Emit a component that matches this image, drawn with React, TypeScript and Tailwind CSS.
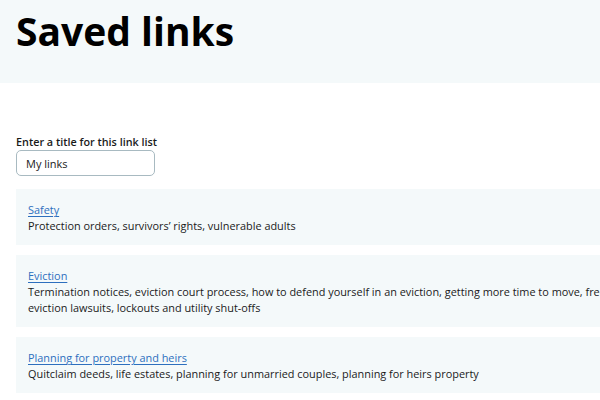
import React from 'react';

interface SavedLink {
  title: string;
  description: string;
}

const links: SavedLink[] = [
  { title: 'Safety', description: 'Protection orders, survivors’ rights, vulnerable adults' },
  {
    title: 'Eviction',
    description:
      'Termination notices, eviction court process, how to defend yourself in an eviction, getting more time to move, free legal help for eviction lawsuits, lockouts and utility shut-offs',
  },
  {
    title: 'Planning for property and heirs',
    description: 'Quitclaim deeds, life estates, planning for unmarried couples, planning for heirs property',
  },
];

function LinkCard({ link }: { link: SavedLink }) {
  return (
    <div className="bg-[#f4f9fa] px-3 pt-3 pb-[11px]">
      <a href="#" className="block text-[#2d6fbe] underline underline-offset-2 decoration-1 leading-[17px]">
        {link.title}
      </a>
      <p className="text-[#1a1a1a] leading-[16px]">{link.description}</p>
    </div>
  );
}

export default function App() {
  return (
    <div className="w-[600px] h-[400px] overflow-hidden bg-white font-['Open_Sans',sans-serif] text-[10.9px]">
      <div className="w-[716px]">
        <header className="bg-[#f4f9fa] h-[83px] px-4 pt-[3px]">
          <h1 className="text-[39px] font-bold leading-[56px] text-black">Saved links</h1>
        </header>

        <div className="px-4 pt-[51px]">
          <label htmlFor="list-title" className="block text-[10.8px] font-semibold leading-[16px] text-[#1a1a1a]">
            Enter a title for this link list
          </label>
          <input
            id="list-title"
            defaultValue="My links"
            className="w-[139px] h-[26px] rounded-[5px] border border-[#a8bac1] px-[9px] text-[11px] text-[#1a1a1a] outline-none"
          />

          <div className="mt-[13px] flex flex-col gap-[10px]">
            {links.map((link) => (
              <LinkCard key={link.title} link={link} />
            ))}
          </div>
        </div>
      </div>
    </div>
  );
}
